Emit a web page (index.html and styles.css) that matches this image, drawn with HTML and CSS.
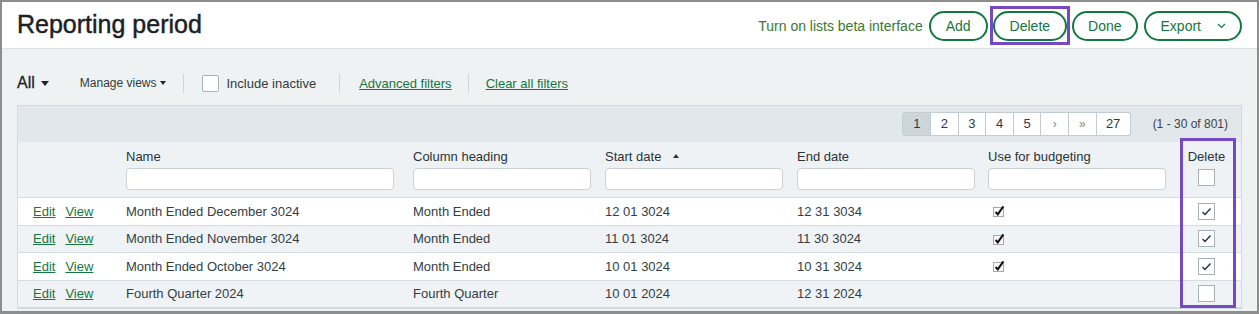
FILE: index.html
```html
<!DOCTYPE html>
<html lang="en">
<head>
	<meta charset="UTF-8">
	<title>Reporting period</title>
	<link rel="stylesheet" href="styles.css">
</head>
<body>
<div class="frame">
	<div class="head">
		<h1 class="title">Reporting period</h1>
		<div class="actions">
			<a class="beta">Turn on lists beta interface</a>
			<button class="pill">Add</button>
			<span class="marked">
				<button class="pill">Delete</button>
				<span class="mark-btn"></span>
			</span>
			<button class="pill">Done</button>
			<button class="pill export">Export
				<svg width="9" height="6" viewBox="0 0 9 6"><path d="M1 1 L4.5 4.5 L8 1" fill="none" stroke="#1a7a44" stroke-width="1.2"/></svg>
			</button>
		</div>
	</div>
	<div class="main">
		<div class="tools">
			<span class="view">All</span><span class="caret big"></span>
			<span class="manage">Manage views</span><span class="caret small"></span>
			<span class="sep"></span>
			<span class="box"></span>
			<span class="inactive">Include inactive</span>
			<span class="sep sep2"></span>
			<a class="flink adv">Advanced filters</a>
			<span class="sep sep3"></span>
			<a class="flink">Clear all filters</a>
		</div>
		<div class="grid">
			<div class="pager">
				<div class="pages">
					<span class="pg on">1</span>
					<span class="pg">2</span>
					<span class="pg">3</span>
					<span class="pg">4</span>
					<span class="pg">5</span>
					<span class="pg arrow">&rsaquo;</span>
					<span class="pg arrow">&raquo;</span>
					<span class="pg last">27</span>
				</div>
				<span class="count">(1 - 30 of 801)</span>
			</div>
			<table class="list">
				<colgroup>
					<col style="width:100px"><col style="width:287px"><col style="width:192px"><col style="width:192px"><col style="width:191px"><col style="width:192px"><col>
				</colgroup>
				<tr class="hdr">
					<th></th>
					<th><div class="lbl">Name</div><input class="flt wide" type="text"></th>
					<th><div class="lbl">Column heading</div><input class="flt" type="text"></th>
					<th><div class="lbl">Start date <span class="sort"></span></div><input class="flt" type="text"></th>
					<th><div class="lbl">End date</div><input class="flt" type="text"></th>
					<th><div class="lbl">Use for budgeting</div><input class="flt" type="text"></th>
					<th class="del"><div class="lbl">Delete</div><span class="cb"></span></th>
				</tr>
				<tr>
					<td class="links"><a>Edit</a><a>View</a></td>
					<td>Month Ended December 3024</td>
					<td>Month Ended</td>
					<td>12 01 3024</td>
					<td>12 31 3034</td>
					<td><svg class="tick" width="12" height="12" viewBox="0 0 12 12"><rect x="0.5" y="2.5" width="10" height="9" fill="#fafafa" stroke="#a9a9a9"/><path d="M2.6 7 L4.8 9.4 L10.4 1.4" fill="none" stroke="#111" stroke-width="2"/></svg></td>
					<td class="del"><span class="cb"><svg width="15" height="15" viewBox="0 0 15 15"><path d="M3.5 8 L6 10.5 L11.5 4.5" fill="none" stroke="#1f2a44" stroke-width="1.3"/></svg></span></td>
				</tr>
				<tr class="alt">
					<td class="links"><a>Edit</a><a>View</a></td>
					<td>Month Ended November 3024</td>
					<td>Month Ended</td>
					<td>11 01 3024</td>
					<td>11 30 3024</td>
					<td><svg class="tick" width="12" height="12" viewBox="0 0 12 12"><rect x="0.5" y="2.5" width="10" height="9" fill="#fafafa" stroke="#a9a9a9"/><path d="M2.6 7 L4.8 9.4 L10.4 1.4" fill="none" stroke="#111" stroke-width="2"/></svg></td>
					<td class="del"><span class="cb"><svg width="15" height="15" viewBox="0 0 15 15"><path d="M3.5 8 L6 10.5 L11.5 4.5" fill="none" stroke="#1f2a44" stroke-width="1.3"/></svg></span></td>
				</tr>
				<tr>
					<td class="links"><a>Edit</a><a>View</a></td>
					<td>Month Ended October 3024</td>
					<td>Month Ended</td>
					<td>10 01 3024</td>
					<td>10 31 3024</td>
					<td><svg class="tick" width="12" height="12" viewBox="0 0 12 12"><rect x="0.5" y="2.5" width="10" height="9" fill="#fafafa" stroke="#a9a9a9"/><path d="M2.6 7 L4.8 9.4 L10.4 1.4" fill="none" stroke="#111" stroke-width="2"/></svg></td>
					<td class="del"><span class="cb"><svg width="15" height="15" viewBox="0 0 15 15"><path d="M3.5 8 L6 10.5 L11.5 4.5" fill="none" stroke="#1f2a44" stroke-width="1.3"/></svg></span></td>
				</tr>
				<tr class="alt">
					<td class="links"><a>Edit</a><a>View</a></td>
					<td>Fourth Quarter 2024</td>
					<td>Fourth Quarter</td>
					<td>10 01 2024</td>
					<td>12 31 2024</td>
					<td></td>
					<td class="del"><span class="cb"></span></td>
				</tr>
			</table>
			<span class="mark-col"></span>
		</div>
	</div>
</div>
</body>
</html>
```

FILE: styles.css
```css
body{margin: 0;font-family: "Liberation Sans", Arial, sans-serif;color: #333e44;}
.frame{width: 1259px;height: 314px;box-sizing: border-box;border: 2px solid #8d8d8d;border-bottom-width: 3px;background: #eef2f3;overflow: hidden;}

.head{height: 46px;background: #fff;border-bottom: 1px solid #dce3e6;display: flex;justify-content: space-between;padding: 0 15px;}
.title{margin: 0;padding-top: 8px;font-size: 25px;line-height: 29px;font-weight: normal;color: #1b2125;-webkit-text-stroke: 0.45px #1b2125;}
.actions{display: flex;align-items: center;height: 46px;padding-top: 1px;box-sizing: border-box;}
.beta{font-size: 14px;color: #3a7834;margin-right: 6px;}
.pill{height: 30px;border: 2px solid #11783f;border-radius: 15px;background: #fff;color: #16763f;
	font-family: "Liberation Sans", Arial, sans-serif;font-size: 14px;padding: 0 14px;margin-right: 6px;cursor: pointer;}
.pill:first-of-type{padding: 0 15px;margin-right: 5px;}
.export{margin-right: 0;padding: 0 14px 0 15px;display: flex;align-items: center;}
.export svg{margin-left: 16px;}
.marked{position: relative;display: flex;}
.mark-btn{position: absolute;left: -3px;top: -5px;width: 74px;height: 33px;border: 3px solid #7549c4;pointer-events: none;}

.main{padding: 0 15px;}
.tools{display: flex;align-items: center;height: 22px;margin-top: 23px;margin-bottom: 11px;font-size: 13px;}
.view{font-size: 16px;color: #1e2428;-webkit-text-stroke: 0.3px #1e2428;}
.caret{display: block;width: 0;height: 0;border-style: solid;border-color: #1e2428 transparent transparent transparent;}
.caret.big{border-width: 5px 4px 0 4px;margin-left: 6px;}
.caret.small{border-width: 4px 3px 0 3px;margin-left: 3px;}
.manage{font-size: 12px;color: #333b40;margin-left: 31px;}
.sep{width: 1px;height: 19px;background: #cfd6da;margin-left: 17px;}
.box{width: 15px;height: 15px;border: 1px solid #a9b3b9;border-radius: 2px;background: #fff;margin-left: 18px;}
.inactive{margin-left: 8px;color: #333b40;}
.sep2{margin-left: 23px;}
.sep3{margin-left: 16px;}
.flink{color: #16763f;text-decoration: underline;margin-left: 17px;}
.flink.adv{margin-left: 19px;}

.grid{position: relative;border: 1px solid #d3dadd;background: #eef2f4;}
.pager{height: 36px;background: #e1e7ea;display: flex;align-items: flex-start;justify-content: flex-end;padding-right: 13px;}
.pages{display: flex;margin-top: 6px;}
.pg{width: 26.6px;height: 22px;line-height: 22px;text-align: center;font-size: 13px;color: #2f3a40;background: #fff;
	border: 1px solid #c3ccd1;border-left: none;}
.pg:first-child{border-left: 1px solid #c3ccd1;border-radius: 3px 0 0 3px;}
.pg.on{background: #cdd6db;}
.pg.arrow{color: #7d8a7a;font-size: 12px;}
.pg.last{width: 33px;border-radius: 0 3px 3px 0;}
.count{font-size: 12px;color: #3a4449;margin: 11px 0 0 22px;}

.list{width: 100%;border-collapse: collapse;table-layout: fixed;font-size: 13px;}
.list th{text-align: left;font-weight: normal;color: #2b3338;padding: 6px 0 7px 8px;vertical-align: top;border-bottom: 1px solid #d5dce0;}
.lbl{height: 17px;line-height: 17px;margin-bottom: 3px;white-space: nowrap;}
.flt{display: block;width: 178px;height: 22px;box-sizing: border-box;border: 1px solid #c9d1d5;border-radius: 4px;background: #fff;outline: none;margin: 0;}
.flt.wide{width: 268px;}
.sort{display: inline-block;width: 0;height: 0;border-style: solid;border-width: 0 3.5px 4px 3.5px;border-color: transparent transparent #2b3338 transparent;margin-left: 8px;vertical-align: 3px;}
.list td{height: 26.5px;padding: 0 0 0 8px;background: #fff;border-bottom: 1px solid #d5dce0;white-space: nowrap;color: #333e44;}
.list tr.alt td{background: #eff3f5;}
.list td.links{padding-left: 15px;}
.links a{color: #16763f;text-decoration: underline;margin-right: 10px;}
.tick{display: block;margin-left: 5px;}
.list .del{text-align: center;padding-left: 0;}
.cb{display: inline-block;width: 15px;height: 15px;border: 1px solid #a7b1b7;background: #fff;vertical-align: middle;}
.cb svg{display: block;}
th.del .cb{margin-top: 1px;}
.mark-col{position: absolute;left: 1162px;top: 32px;width: 50px;height: 164px;border: 3px solid #7549c4;pointer-events: none;}
```
